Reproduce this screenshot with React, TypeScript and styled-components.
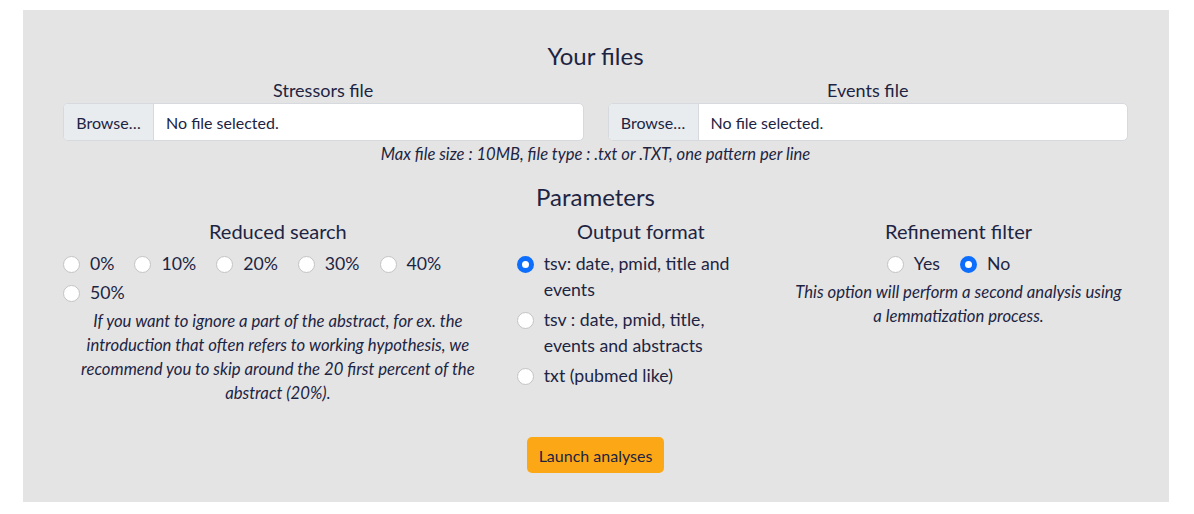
import React from "react";
import styled, { createGlobalStyle } from "styled-components";

const Global = createGlobalStyle`
  html, body { margin: 0; padding: 0; background: #ffffff; }
  body { font-family: Lato, "Open Sans", sans-serif; color: #1d2443; font-size: 16px; }
  * { box-sizing: border-box; }
`;

const Panel = styled.section`
  margin: 10px 0 0 23px;
  width: 1146px;
  height: 492px;
  background: #e4e4e4;
  padding: 31px 41px 0 40px;
  display: flex;
  flex-direction: column;
  align-items: stretch;
`;

const SectionTitle = styled.h2<{ $top?: number }>`
  margin: ${(p) => p.$top ?? 0}px 0 0 0;
  font-size: 24px;
  font-weight: 400;
  line-height: 29px;
  text-align: center;
`;

const Row = styled.div`
  display: flex;
  margin: 0 -12px;
`;

const Column = styled.div<{ $span: number }>`
  flex: 0 0 ${(p) => (p.$span / 12) * 100}%;
  padding: 0 12px;
  display: flex;
  flex-direction: column;
  align-items: stretch;
  min-width: 0;
`;

const FieldLabel = styled.div`
  margin-top: 7px;
  text-align: center;
  font-size: 18px;
  line-height: 26px;
`;

const FileInput = styled.div`
  display: flex;
  height: 38px;
  background: #ffffff;
  border: 1px solid #d6d9dd;
  border-radius: 5px;
  overflow: hidden;
`;

const BrowseButton = styled.div`
  width: 90px;
  flex: none;
  background: #e9ecef;
  border-right: 1px solid #d6d9dd;
  display: flex;
  align-items: center;
  justify-content: center;
  font-size: 16px;
`;

const FileName = styled.div`
  padding-left: 12px;
  display: flex;
  align-items: center;
  font-size: 16px;
`;

const Hint = styled.div`
  margin-top: 1px;
  font-style: italic;
  font-size: 16.6px;
  line-height: 24px;
  text-align: center;
`;

const SubTitle = styled.h3`
  margin: 8px 0 8px 0;
  font-size: 20px;
  font-weight: 400;
  line-height: 24px;
  text-align: center;
`;

const RadioWrap = styled.div<{ $center?: boolean }>`
  display: flex;
  flex-wrap: wrap;
  row-gap: 3px;
  justify-content: ${(p) => (p.$center ? "center" : "flex-start")};
`;

const RadioStack = styled.div`
  display: flex;
  flex-direction: column;
  gap: 4px;
  padding-right: 8px;
`;

const RadioItem = styled.label<{ $inline?: boolean }>`
  display: flex;
  align-items: flex-start;
  gap: 10px;
  margin-right: ${(p) => (p.$inline ? "20px" : "0")};
  font-size: 17.7px;
  line-height: 26px;
`;

const Circle = styled.span<{ $checked?: boolean }>`
  flex: none;
  width: 17px;
  height: 17px;
  margin-top: 4.5px;
  border-radius: 50%;
  background: #ffffff;
  border: ${(p) => (p.$checked ? "5px solid #0d6efd" : "1px solid #c4c4c4")};
`;

const Note = styled.p`
  margin: 3px 0 0 0;
  padding: 0 5px;
  font-style: italic;
  font-size: 16.7px;
  line-height: 24px;
  text-align: center;
`;

const ButtonRow = styled.div`
  display: flex;
  justify-content: center;
  margin-top: 32px;
`;

const LaunchButton = styled.button`
  height: 36px;
  padding: 0 12px;
  border: none;
  border-radius: 5px;
  background: #fca816;
  color: #1d2443;
  font-family: Lato, "Open Sans", sans-serif;
  font-size: 16px;
  cursor: pointer;
`;

function Radio({ label, checked, inline }: { label: string; checked?: boolean; inline?: boolean }) {
  return (
    <RadioItem $inline={inline}>
      <Circle $checked={checked} />
      <span>{label}</span>
    </RadioItem>
  );
}

export default function App() {
  return (
    <>
      <Global />
      <Panel>
        <SectionTitle>Your files</SectionTitle>
        <Row>
          <Column $span={6}>
            <FieldLabel>Stressors file</FieldLabel>
            <FileInput>
              <BrowseButton>Browse…</BrowseButton>
              <FileName>No file selected.</FileName>
            </FileInput>
          </Column>
          <Column $span={6}>
            <FieldLabel>Events file</FieldLabel>
            <FileInput>
              <BrowseButton>Browse…</BrowseButton>
              <FileName>No file selected.</FileName>
            </FileInput>
          </Column>
        </Row>
        <Hint>Max file size : 10MB, file type : .txt or .TXT, one pattern per line</Hint>
        <SectionTitle $top={16}>Parameters</SectionTitle>
        <Row>
          <Column $span={5}>
            <SubTitle>Reduced search</SubTitle>
            <RadioWrap>
              {["0%", "10%", "20%", "30%", "40%", "50%"].map((v) => (
                <Radio key={v} label={v} inline />
              ))}
            </RadioWrap>
            <Note>
              If you want to ignore a part of the abstract, for ex. the introduction that often refers to working
              hypothesis, we recommend you to skip around the 20 first percent of the abstract (20%).
            </Note>
          </Column>
          <Column $span={3}>
            <SubTitle>Output format</SubTitle>
            <RadioStack>
              <Radio label="tsv: date, pmid, title and events" checked />
              <Radio label="tsv : date, pmid, title, events and abstracts" />
              <Radio label="txt (pubmed like)" />
            </RadioStack>
          </Column>
          <Column $span={4}>
            <SubTitle>Refinement filter</SubTitle>
            <RadioWrap $center>
              <Radio label="Yes" inline />
              <Radio label="No" checked inline />
            </RadioWrap>
            <Note>This option will perform a second analysis using a lemmatization process.</Note>
          </Column>
        </Row>
        <ButtonRow>
          <LaunchButton>Launch analyses</LaunchButton>
        </ButtonRow>
      </Panel>
    </>
  );
}
